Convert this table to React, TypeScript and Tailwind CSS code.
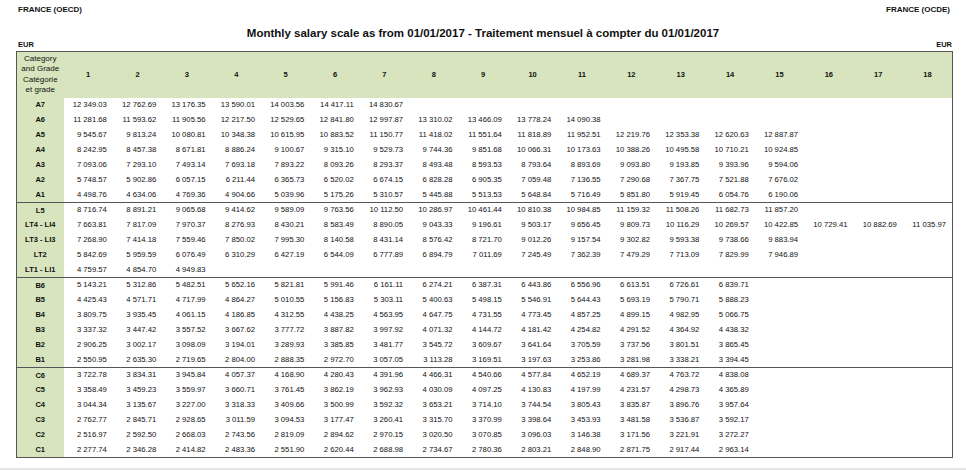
import React from 'react'

type Row = { grade: string; values: string[] }

const groups: Row[][] = [
  [
    { grade: 'A7', values: ['12 349.03', '12 762.69', '13 176.35', '13 590.01', '14 003.56', '14 417.11', '14 830.67'] },
    { grade: 'A6', values: ['11 281.68', '11 593.62', '11 905.56', '12 217.50', '12 529.65', '12 841.80', '12 997.87', '13 310.02', '13 466.09', '13 778.24', '14 090.38'] },
    { grade: 'A5', values: ['9 545.67', '9 813.24', '10 080.81', '10 348.38', '10 615.95', '10 883.52', '11 150.77', '11 418.02', '11 551.64', '11 818.89', '11 952.51', '12 219.76', '12 353.38', '12 620.63', '12 887.87'] },
    { grade: 'A4', values: ['8 242.95', '8 457.38', '8 671.81', '8 886.24', '9 100.67', '9 315.10', '9 529.73', '9 744.36', '9 851.68', '10 066.31', '10 173.63', '10 388.26', '10 495.58', '10 710.21', '10 924.85'] },
    { grade: 'A3', values: ['7 093.06', '7 293.10', '7 493.14', '7 693.18', '7 893.22', '8 093.26', '8 293.37', '8 493.48', '8 593.53', '8 793.64', '8 893.69', '9 093.80', '9 193.85', '9 393.96', '9 594.06'] },
    { grade: 'A2', values: ['5 748.57', '5 902.86', '6 057.15', '6 211.44', '6 365.73', '6 520.02', '6 674.15', '6 828.28', '6 905.35', '7 059.48', '7 136.55', '7 290.68', '7 367.75', '7 521.88', '7 676.02'] },
    { grade: 'A1', values: ['4 498.76', '4 634.06', '4 769.36', '4 904.66', '5 039.96', '5 175.26', '5 310.57', '5 445.88', '5 513.53', '5 648.84', '5 716.49', '5 851.80', '5 919.45', '6 054.76', '6 190.06'] },
  ],
  [
    { grade: 'L5', values: ['8 716.74', '8 891.21', '9 065.68', '9 414.62', '9 589.09', '9 763.56', '10 112.50', '10 286.97', '10 461.44', '10 810.38', '10 984.85', '11 159.32', '11 508.26', '11 682.73', '11 857.20'] },
    { grade: 'LT4 - LI4', values: ['7 663.81', '7 817.09', '7 970.37', '8 276.93', '8 430.21', '8 583.49', '8 890.05', '9 043.33', '9 196.61', '9 503.17', '9 656.45', '9 809.73', '10 116.29', '10 269.57', '10 422.85', '10 729.41', '10 882.69', '11 035.97'] },
    { grade: 'LT3 - LI3', values: ['7 268.90', '7 414.18', '7 559.46', '7 850.02', '7 995.30', '8 140.58', '8 431.14', '8 576.42', '8 721.70', '9 012.26', '9 157.54', '9 302.82', '9 593.38', '9 738.66', '9 883.94'] },
    { grade: 'LT2', values: ['5 842.69', '5 959.59', '6 076.49', '6 310.29', '6 427.19', '6 544.09', '6 777.89', '6 894.79', '7 011.69', '7 245.49', '7 362.39', '7 479.29', '7 713.09', '7 829.99', '7 946.89'] },
    { grade: 'LT1 - LI1', values: ['4 759.57', '4 854.70', '4 949.83'] },
  ],
  [
    { grade: 'B6', values: ['5 143.21', '5 312.86', '5 482.51', '5 652.16', '5 821.81', '5 991.46', '6 161.11', '6 274.21', '6 387.31', '6 443.86', '6 556.96', '6 613.51', '6 726.61', '6 839.71'] },
    { grade: 'B5', values: ['4 425.43', '4 571.71', '4 717.99', '4 864.27', '5 010.55', '5 156.83', '5 303.11', '5 400.63', '5 498.15', '5 546.91', '5 644.43', '5 693.19', '5 790.71', '5 888.23'] },
    { grade: 'B4', values: ['3 809.75', '3 935.45', '4 061.15', '4 186.85', '4 312.55', '4 438.25', '4 563.95', '4 647.75', '4 731.55', '4 773.45', '4 857.25', '4 899.15', '4 982.95', '5 066.75'] },
    { grade: 'B3', values: ['3 337.32', '3 447.42', '3 557.52', '3 667.62', '3 777.72', '3 887.82', '3 997.92', '4 071.32', '4 144.72', '4 181.42', '4 254.82', '4 291.52', '4 364.92', '4 438.32'] },
    { grade: 'B2', values: ['2 906.25', '3 002.17', '3 098.09', '3 194.01', '3 289.93', '3 385.85', '3 481.77', '3 545.72', '3 609.67', '3 641.64', '3 705.59', '3 737.56', '3 801.51', '3 865.45'] },
    { grade: 'B1', values: ['2 550.95', '2 635.30', '2 719.65', '2 804.00', '2 888.35', '2 972.70', '3 057.05', '3 113.28', '3 169.51', '3 197.63', '3 253.86', '3 281.98', '3 338.21', '3 394.45'] },
  ],
  [
    { grade: 'C6', values: ['3 722.78', '3 834.31', '3 945.84', '4 057.37', '4 168.90', '4 280.43', '4 391.96', '4 466.31', '4 540.66', '4 577.84', '4 652.19', '4 689.37', '4 763.72', '4 838.08'] },
    { grade: 'C5', values: ['3 358.49', '3 459.23', '3 559.97', '3 660.71', '3 761.45', '3 862.19', '3 962.93', '4 030.09', '4 097.25', '4 130.83', '4 197.99', '4 231.57', '4 298.73', '4 365.89'] },
    { grade: 'C4', values: ['3 044.34', '3 135.67', '3 227.00', '3 318.33', '3 409.66', '3 500.99', '3 592.32', '3 653.21', '3 714.10', '3 744.54', '3 805.43', '3 835.87', '3 896.76', '3 957.64'] },
    { grade: 'C3', values: ['2 762.77', '2 845.71', '2 928.65', '3 011.59', '3 094.53', '3 177.47', '3 260.41', '3 315.70', '3 370.99', '3 398.64', '3 453.93', '3 481.58', '3 536.87', '3 592.17'] },
    { grade: 'C2', values: ['2 516.97', '2 592.50', '2 668.03', '2 743.56', '2 819.09', '2 894.62', '2 970.15', '3 020.50', '3 070.85', '3 096.03', '3 146.38', '3 171.56', '3 221.91', '3 272.27'] },
    { grade: 'C1', values: ['2 277.74', '2 346.28', '2 414.82', '2 483.36', '2 551.90', '2 620.44', '2 688.98', '2 734.67', '2 780.36', '2 803.21', '2 848.90', '2 871.75', '2 917.44', '2 963.14'] },
  ],
]

const steps = Array.from({ length: 18 }, (_, i) => i + 1)

export default function App() {
  return (
    <div className="w-[966px] h-[470px] bg-white flex flex-col font-['Liberation_Sans',Arial,sans-serif] text-[#111]">
      {/* page heading */}
      <div className="flex justify-between pl-[18px] pr-[16px] pt-[5px] text-[8px] leading-[10px] font-bold">
        <span>FRANCE (OECD)</span>
        <span>FRANCE (OCDE)</span>
      </div>
      <h1 className="mt-[11px] text-center text-[11.5px] leading-[14px] font-bold">
        Monthly salary scale as from 01/01/2017 - Traitement mensuel à compter du 01/01/2017
      </h1>
      <div className="flex justify-between pl-[18px] pr-[14px] text-[7.5px] leading-[10px] font-bold">
        <span>EUR</span>
        <span>EUR</span>
      </div>

      {/* salary table */}
      <table className="ml-[16px] mt-[1px] w-[937px] table-fixed border-collapse border border-[#555]">
        <colgroup>
          <col className="w-[47px]" />
          {steps.map((s) => (
            <col key={s} />
          ))}
        </colgroup>
        <thead>
          <tr className="h-[46px] bg-[#d7e4bd]">
            <th className="p-0 text-[8px] leading-[10.5px] font-normal text-center whitespace-nowrap">
              Category
              <br />
              and Grade
              <br />
              Catégorie
              <br />
              et grade
            </th>
            {steps.map((s) => (
              <th key={s} className="p-0 text-[7.5px] font-bold text-center">
                {s}
              </th>
            ))}
          </tr>
        </thead>
        {groups.map((rows, gi) => (
          <tbody key={gi} className={gi > 0 ? 'border-t border-[#555]' : ''}>
            {rows.map((row) => (
              <tr key={row.grade} className="h-[15px]">
                <td className="p-0 bg-[#d7e4bd] text-center text-[7.5px] font-bold leading-none whitespace-nowrap">
                  {row.grade}
                </td>
                {steps.map((s, i) => (
                  <td key={s} className="p-0 pr-[6px] text-right text-[7.7px] leading-none whitespace-nowrap">
                    {row.values[i] ?? ''}
                  </td>
                ))}
              </tr>
            ))}
          </tbody>
        ))}
      </table>

      <div className="flex-1" />
      <div className="h-[2px] bg-[#e4e4e4]" />
    </div>
  )
}
